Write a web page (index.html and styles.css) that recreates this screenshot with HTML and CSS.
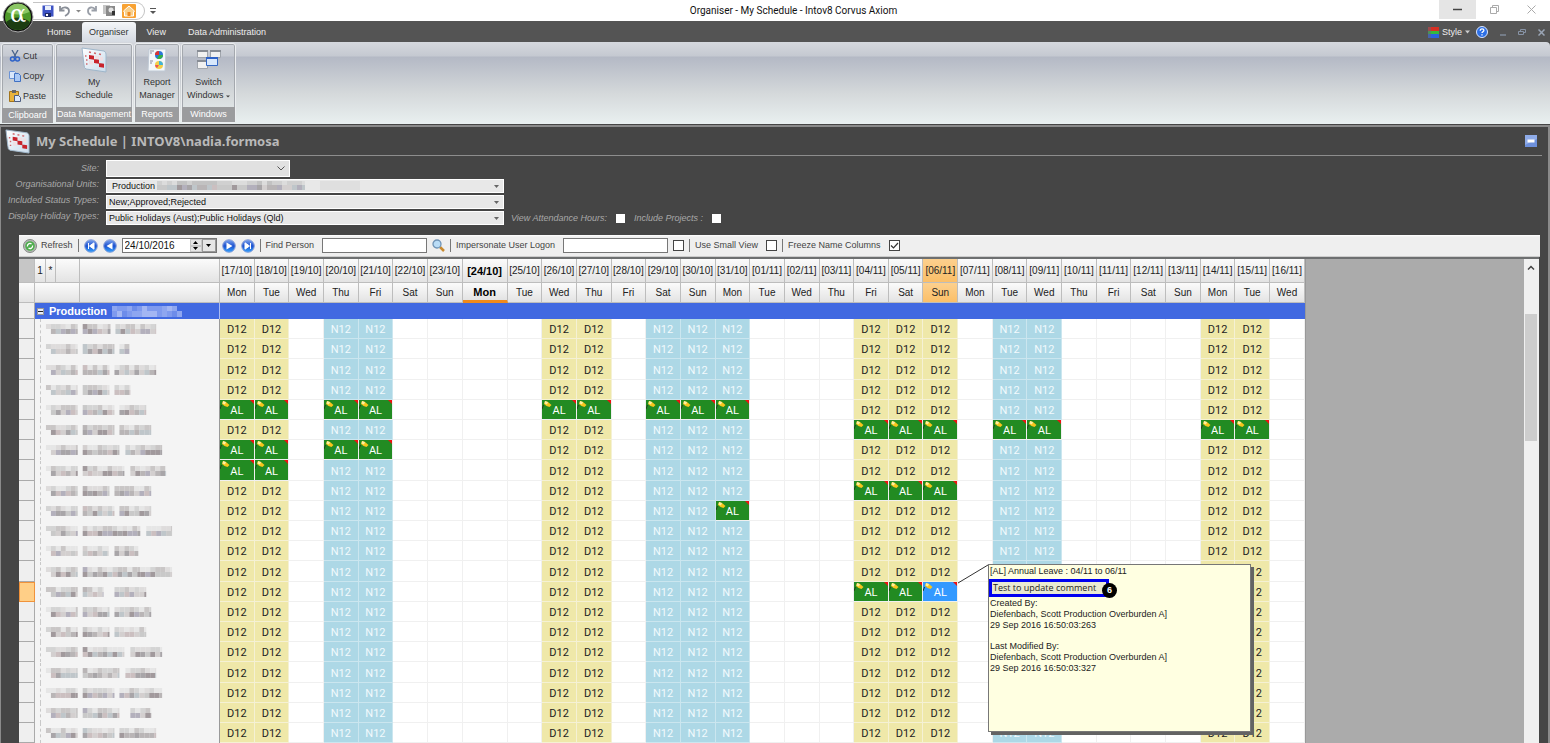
FILE: index.html
```html
<!DOCTYPE html>
<html lang="en">
<head>
<meta charset="utf-8">
<title>Organiser - My Schedule - Intov8 Corvus Axiom</title>
<link rel="stylesheet" href="styles.css">
</head>
<body>
<svg class="defs" width="0" height="0" aria-hidden="true">
  <defs>
    <linearGradient id="blueBall" x1="0" y1="0" x2="0" y2="1"><stop offset="0" stop-color="#7fa6ee"/><stop offset=".5" stop-color="#1b50cf"/><stop offset="1" stop-color="#35a5ff"/></linearGradient>
    <linearGradient id="sheet" x1="0" y1="0" x2="1" y2="1"><stop offset="0" stop-color="#ffffff"/><stop offset="1" stop-color="#c9dcec"/></linearGradient>
    <symbol id="calendar" viewBox="0 0 26 26">
      <path d="M1 1 L23 4 Q25 5 25 7 L25 25 L5 22 Q3 21 3 18 Z" fill="url(#sheet)" stroke="#9fb6ca"/>
      <path d="M8 5l2 .4M13 6l2 .4M18 7l2 .4M4 9h1.500M5 13h1.500M5 17h1.500" stroke="#d0686c" stroke-width="1.500"/>
      <path d="M8 8l5 .8v4l-5-.8zM13 12l5 .8v4l-5-.8zM18 16l5 .8v4l-5-.8z" fill="#c8232c"/>
      <path d="M8 13l4 .7v4l-4-.6zM14 8.500l4 .6v3l-4-.6zM19 9.500l3 .5v4l-3-.5z" fill="#f1dfe3"/>
    </symbol>
  </defs>
</svg>

<header class="titlebar">
  <button class="app-button" aria-label="Application menu">
    <svg width="32" height="32" viewBox="0 0 32 32"><circle cx="16" cy="16" r="15" fill="#111" stroke="#aaa"/><circle cx="16" cy="16" r="13" fill="#4f9a2a"/><path d="M4 21a13 13 0 0 0 24 0Q16 12 4 21z" fill="#1c3d12"/><path d="M4.500 11a12 12 0 0 1 23 0Q16 16 4.500 11z" fill="#8cc765"/></svg>
    <span class="alpha">α</span>
  </button>
  <div class="quick">
    <button aria-label="Save"><svg width="12" height="12" viewBox="0 0 12 12"><path d="M.5 .5h11v11h-10l-1-1z" fill="#3d52c4"/><path d="M3 1h6v4H3z" fill="#e9effb"/><path d="M3 8h6v4H3z" fill="#1e2a66"/><path d="M4 9h2v2H4z" fill="#fff"/></svg></button>
    <button aria-label="Undo"><svg width="12" height="12" viewBox="0 0 12 12"><path d="M1 1v4.500h4.500M1.500 5C4 1 10 2 10 6q0 3-4 5" fill="none" stroke="#8a8f98" stroke-width="1.800"/></svg></button>
    <button aria-label="Undo list"><svg width="5" height="4" viewBox="0 0 5 4"><path d="M0 1h5L2.500 3.500z" fill="#888"/></svg></button>
    <button aria-label="Redo"><svg width="12" height="12" viewBox="0 0 12 12"><path d="M10 1v4.500H5.500M9.500 5C7 1 2 2 2 6q0 3 3 4" fill="none" stroke="#9a9fa8" stroke-width="1.800"/></svg></button>
    <button aria-label="Copy view"><svg width="14" height="13" viewBox="0 0 14 13"><path d="M0 1h7v9H0z" fill="#c5c5c5"/><path d="M3 2h9v10H3z" fill="#8a8a8a"/><circle cx="8" cy="6" r="2.500" fill="#e4e4e4"/><path d="M9 7h3v4H9z" fill="#333"/></svg></button>
    <button aria-label="Home"><svg width="14" height="14" viewBox="0 0 14 14"><rect width="14" height="14" rx="1" fill="#f8a233"/><path d="M1.500 7L7 2l5.500 5-1 1v4h-9V8z" fill="#f9d08c" stroke="#fff" stroke-width="1"/><path d="M5.500 8h3v4h-3z" fill="#ef8c24"/></svg></button>
  </div>
  <button class="quick-more" aria-label="Customise toolbar"><svg width="6" height="6" viewBox="0 0 6 6"><path d="M0 .5h6" stroke="#555"/><path d="M0 3h6L3 6z" fill="#555"/></svg></button>
  <h1 class="window-title">Organiser - My Schedule - Intov8 Corvus Axiom</h1>
  <div class="window-buttons">
    <button class="minimise" aria-label="Minimise"><svg width="9" height="9" viewBox="0 0 9 9"><path d="M0 4.500h9" stroke="#444" stroke-width="1.500"/></svg></button>
    <button aria-label="Restore"><svg width="9" height="9" viewBox="0 0 9 9"><path d="M.5 2.500h6v6h-6zM2.500 2V.5h6v6H7" fill="none" stroke="#aaa"/></svg></button>
    <button aria-label="Close"><svg width="9" height="9" viewBox="0 0 9 9"><path d="M.5 .5l8 8M8.500 .5l-8 8" stroke="#aaa"/></svg></button>
  </div>
</header>

<nav class="tabs">
  <a href="#home">Home</a>
  <a href="#organiser" class="active">Organiser</a>
  <a href="#view">View</a>
  <a href="#admin">Data Administration</a>
  <div class="tab-tools">
    <button><svg width="11" height="11" viewBox="0 0 11 11"><path d="M0 0h11v4H0z" fill="#d62f23"/><path d="M0 4h11v3H0z" fill="#35b83c"/><path d="M0 7h11v4H0z" fill="#2b62de"/><path d="M0 0h3v11H0z" fill="#667" opacity=".5"/></svg>Style<svg width="5" height="4" viewBox="0 0 5 4"><path d="M0 .5h5L2.500 3.500z" fill="#ccc"/></svg></button>
    <button aria-label="Help"><svg width="12" height="12" viewBox="0 0 12 12"><circle cx="6" cy="6" r="5.500" fill="#2c6fe6" stroke="#dbe6ff"/><path d="M4.200 4.800q0-2 1.900-2 1.800 0 1.800 1.500 0 1-1.100 1.500-.8.400-.8 1.300M6 8.200v1.400" fill="none" stroke="#fff" stroke-width="1.300"/></svg></button>
    <button aria-label="Minimise view"><svg width="6" height="8" viewBox="0 0 6 8"><path d="M0 7h6" stroke="#8793a5" stroke-width="1.300"/></svg></button>
    <button aria-label="Restore view"><svg width="8" height="6" viewBox="0 0 8 6"><path d="M.5 2.500h5v3h-5zM2.500 2V.5h5v3H6" fill="none" stroke="#8793a5"/></svg></button>
    <button aria-label="Close view"><svg width="7" height="7" viewBox="0 0 7 7"><path d="M.5 .5l6 6M6.500 .5l-6 6" stroke="#9aa5b5" stroke-width="1.500"/></svg></button>
  </div>
</nav>

<section class="ribbon">
  <div class="group">
    <div class="small-tools">
      <button><svg width="12" height="12" viewBox="0 0 12 12"><path d="M3 0l4 7M9 0L5 7" stroke="#49648c" stroke-width="1.300"/><circle cx="3.500" cy="9" r="2" fill="none" stroke="#2d62c8" stroke-width="1.500"/><circle cx="8.500" cy="9" r="2" fill="none" stroke="#2d62c8" stroke-width="1.500"/></svg>Cut</button>
      <button><svg width="12" height="12" viewBox="0 0 12 12"><path d="M.5 1.500h5l1 1v6h-6z" fill="#d9e7fb" stroke="#6b93d6"/><path d="M5.500 3.500h4l2 2v6h-6z" fill="#a9c8f5" stroke="#3f70c2"/></svg>Copy</button>
      <button><svg width="12" height="12" viewBox="0 0 12 12"><path d="M.5 1.500h9v10h-9z" fill="#e9b33c" stroke="#a2741c"/><path d="M3 0h4v3H3z" fill="#666"/><path d="M5.500 5.500h4l2 2v4h-6z" fill="#dce8fa" stroke="#4b5c80"/></svg>Paste</button>
    </div>
    <div class="caption">Clipboard</div>
  </div>
  <div class="group wide">
    <button class="big"><svg width="26" height="26"><use href="#calendar"/></svg><span>My<br>Schedule</span></button>
    <div class="caption">Data Management</div>
  </div>
  <div class="group">
    <button class="big"><svg width="24" height="26" viewBox="0 0 24 26"><path d="M4 2h17l-1 22H3z" fill="#f4f7fa" stroke="#bfc9d5"/><circle cx="14" cy="8" r="4" fill="#2b77d8"/><path d="M14 8V4a4 4 0 0 0-4 4z" fill="#d33"/><path d="M14 8h4a4 4 0 0 1-6 3.500z" fill="#35b044"/><circle cx="14" cy="18" r="4" fill="#f2cf4a"/><path d="M14 18v-4a4 4 0 0 1 4 4z" fill="#41b4d8"/><path d="M14 18h-4a4 4 0 0 0 2 3z" fill="#e55"/><path d="M5 4h4M5 6h2M5 14h3M5 16h2" stroke="#889"/></svg><span>Report<br>Manager</span></button>
    <div class="caption">Reports</div>
  </div>
  <div class="group">
    <button class="big"><svg width="26" height="26" viewBox="0 0 26 26"><g fill="#f1f1f1" stroke="#a0a5ac"><path d="M1.500 3.500h10v7h-10zM14.500 3.500h10v7h-10zM1.500 13.500h10v8h-10z"/></g><path d="M1 4h11M14 4h11M1 14h11" stroke="#878c94" stroke-width="2"/><path d="M10.500 10.500h11v8h-11z" fill="#d8e8fc" stroke="#3468c4"/><path d="M10 11h12" stroke="#2f63c7" stroke-width="2"/></svg><span>Switch<br>Windows <svg width="4" height="3" viewBox="0 0 4 3"><path d="M0 .5h4L2 2.500z" fill="#444"/></svg></span></button>
    <div class="caption">Windows</div>
  </div>
</section>

<main class="panel">
  <div class="panel-head">
    <svg width="25" height="25"><use href="#calendar"/></svg>
    <h2>My Schedule | INTOV8\nadia.formosa</h2>
    <button aria-label="Collapse"><svg width="12" height="12" viewBox="0 0 12 12"><rect width="12" height="12" fill="#6d90dc"/><path d="M0 0h12v4L0 10z" fill="#8eabe8"/><path d="M2.500 4.500h7v3h-7z" fill="#fff"/></svg></button>
  </div>

  <form class="filters">
    <label for="site">Site:</label>
    <div class="combo site"><select id="site"><option></option></select><svg width="8" height="5" viewBox="0 0 8 5"><path d="M.5 .5L4 4 7.500 .5" fill="none" stroke="#555"/></svg></div>
    <label for="units">Organisational Units:</label>
    <div class="combo first"><select id="units"><option>Production</option></select><span class="redacted" id="unit-mask"></span><svg width="5" height="3" viewBox="0 0 5 3"><path d="M0 0h5L2.500 3z" fill="#666"/></svg></div>
    <label for="status">Included Status Types:</label>
    <div class="combo"><select id="status"><option>New;Approved;Rejected</option></select><svg width="5" height="3" viewBox="0 0 5 3"><path d="M0 0h5L2.500 3z" fill="#666"/></svg></div>
    <label for="holiday">Display Holiday Types:</label>
    <div class="combo"><select id="holiday"><option>Public Holidays (Aust);Public Holidays (Qld)</option></select><svg width="5" height="3" viewBox="0 0 5 3"><path d="M0 0h5L2.500 3z" fill="#666"/></svg></div>
    <div class="checks">
      <label for="attendance">View Attendance Hours:</label><input type="checkbox" id="attendance">
      <label for="projects">Include Projects :</label><input type="checkbox" id="projects">
    </div>
  </form>

  <div class="toolbar">
    <button><svg width="14" height="14" viewBox="0 0 14 14"><circle cx="7" cy="7" r="6.500" fill="#b5b9b5" stroke="#858985"/><circle cx="7" cy="7" r="4.800" fill="#4fae4e"/><path d="M4.500 7.500a2.500 2.500 0 0 1 4-2.500M9.500 6.500a2.500 2.500 0 0 1-4 2.500" fill="none" stroke="#fff" stroke-width="1.300"/></svg><span class="refresh">Refresh</span></button>
    <i class="bar"></i>
    <button aria-label="First"><svg width="14" height="14" viewBox="0 0 14 14"><circle cx="7" cy="7" r="6.300" fill="url(#blueBall)" stroke="#8aa0d8"/><path d="M4.500 4v6M10 3.800v6.400L5.500 7z" stroke="#fff" fill="#fff"/></svg></button>
    <button aria-label="Previous"><svg width="14" height="14" viewBox="0 0 14 14"><circle cx="7" cy="7" r="6.300" fill="url(#blueBall)" stroke="#8aa0d8"/><path d="M9.500 3.500v7L3.500 7z" fill="#fff"/></svg></button>
    <div class="date">
      <input type="text" value="24/10/2016" aria-label="Date">
      <span class="spin"><button type="button" aria-label="Later"><svg width="5" height="3" viewBox="0 0 5 3"><path d="M0 3h5L2.500 0z"/></svg></button><button type="button" aria-label="Earlier"><svg width="5" height="3" viewBox="0 0 5 3"><path d="M0 0h5L2.500 3z"/></svg></button></span>
      <button type="button" class="drop" aria-label="Open calendar"><svg width="5" height="3" viewBox="0 0 5 3"><path d="M0 0h5L2.500 3z"/></svg></button>
    </div>
    <button aria-label="Next"><svg width="14" height="14" viewBox="0 0 14 14"><circle cx="7" cy="7" r="6.300" fill="url(#blueBall)" stroke="#8aa0d8"/><path d="M4.500 3.500v7l6-3.500z" fill="#fff"/></svg></button>
    <button aria-label="Last"><svg width="14" height="14" viewBox="0 0 14 14"><circle cx="7" cy="7" r="6.300" fill="url(#blueBall)" stroke="#8aa0d8"/><path d="M9.500 4v6M4 3.800v6.400L8.500 7z" stroke="#fff" fill="#fff"/></svg></button>
    <i class="bar"></i>
    <label for="find">Find Person</label><input type="text" id="find">
    <button aria-label="Search"><svg width="13" height="13" viewBox="0 0 13 13"><path d="M8 8l4 4" stroke="#c98a2e" stroke-width="2.500"/><circle cx="5" cy="5" r="4" fill="#b9dcf6" stroke="#6f93b5" stroke-width="1.300"/></svg></button>
    <i class="bar"></i>
    <label for="logon">Impersonate User Logon</label><input type="text" id="logon"><input type="checkbox" id="logon-on" aria-label="Impersonate">
    <i class="bar"></i>
    <label for="small">Use Small View</label><input type="checkbox" id="small">
    <i class="bar"></i>
    <label for="freeze">Freeze Name Columns</label><input type="checkbox" id="freeze" checked>
  </div>

  <div class="grid-area">
    <div class="sheet">
      <table id="schedule"></table>
      <svg class="pointer" width="32" height="20" viewBox="0 0 32 20"><path d="M1 19L31 1" stroke="#333" fill="none"/></svg>
      <aside class="note">
        <p>[AL] Annual Leave : 04/11 to 06/11</p>
        <p class="marked">Test to update comment<b>6</b></p>
        <p>Created By:</p>
        <p>Diefenbach, Scott <span>Production Overburden A]</span></p>
        <p>29 Sep 2016 16:50:03:263</p>
        <p class="later">Last Modified By:</p>
        <p>Diefenbach, Scott <span>Production Overburden A]</span></p>
        <p>29 Sep 2016 16:50:03:327</p>
      </aside>
    </div>
    <div class="scrollbar"><button aria-label="Scroll up"><svg width="8" height="5" viewBox="0 0 8 5"><path d="M1 4.500L4 1.500 7 4.500" fill="none" stroke="#444" stroke-width="1.500"/></svg></button><div class="thumb"></div></div>
  </div>
</main>
<script src="schedule.js"></script>
</body>
</html>
```
FILE: styles.css
```css
* { box-sizing: border-box; }
body {
  margin: 0; height: 100vh; overflow: hidden; display: flex; flex-direction: column;
  background: #454545; color: #333;
  font: 9px/13px "Liberation Sans", sans-serif;
}
button { border: 0; padding: 0; margin: 0; background: none; color: inherit; font: inherit; display: inline-flex; align-items: center; justify-content: center; }
input, select { font: inherit; margin: 0; color: #111; }
h1, h2, p { margin: 0; }
svg { display: block; flex: none; }
.defs { position: absolute; }

.titlebar { position: relative; height: 21px; flex: none; background: #fff; display: flex; align-items: center; padding-left: 33px; }
.app-button { position: absolute; left: 2px; top: 1px; width: 32px; height: 32px; z-index: 3; }
.alpha { position: absolute; inset: 0; color: #fff; font: 24px/27px "DejaVu Serif", serif; text-align: center; }
.quick { height: 18px; width: 112px; display: flex; align-items: center; gap: 5px; padding-left: 9px; border: 1px solid #c4c4c4; border-left: 0; border-radius: 0 9px 9px 0; }
.quick-more { margin-left: 5px; }
.window-title { position: absolute; left: 38%; right: 36%; padding-left: 6px; text-align: center; font: 10px/20px Roboto, sans-serif; color: #111; white-space: nowrap; }
.window-buttons { margin-left: auto; display: flex; align-self: stretch; }
.window-buttons button { width: 37px; height: 19px; }
.window-buttons .minimise { background: #e5e5e5; }

.tabs { flex: none; height: 21px; padding: 1px 5px 0 36px; display: flex; align-items: stretch; background: #545454; color: #eee; }
.tabs a { color: inherit; text-decoration: none; line-height: 20px; padding: 0 11px; }
.tabs a.active { background: linear-gradient(#f4f6f8, #d5dae2); color: #333; padding: 0 7px; border-radius: 3px 3px 0 0; }
.tab-tools { margin-left: auto; display: flex; align-items: center; gap: 12px; }
.tab-tools button { gap: 3px; }
.tab-tools button:nth-child(2) { margin-left: -6px; }

.ribbon { flex: none; height: 82px; padding: 1px; display: flex; gap: 1px; background: linear-gradient(#d5d8de 0, #c5c9d1 14px, #b4b9c5 15px, #d5d9db 52px, #e9f0f0 82px); border-radius: 0 4px 0 0; }
.group { display: flex; flex-direction: column; justify-content: space-between; border: 1px solid #eceef0; border-radius: 3px; box-shadow: 0 0 0 1px #a4a8ae inset; min-width: 51px; }
.group.wide { min-width: 78px; }
.group:nth-child(3) { min-width: 46px; }
.group:nth-child(4) { min-width: 55px; }
.caption { height: 15px; line-height: 15px; text-align: center; background: #9b9c9e; color: #fff; white-space: nowrap; }
.small-tools { display: flex; flex-direction: column; align-items: flex-start; padding: 2px 7px; }
.small-tools button { height: 20px; gap: 2px; }
.big { flex-direction: column; gap: 3px; padding-top: 3px; }
.big span svg { display: inline-block; }

.panel { flex: 1; min-height: 0; display: flex; flex-direction: column; margin-top: 1px; padding: 0 9px 0 18px; border: solid #8a8a8a; border-width: 2px 2px 0 1px; background: #454545; }
.panel-head { height: 29px; flex: none; display: flex; align-items: center; gap: 6px; margin: 0 -3px 0 -5px; border-bottom: 1px solid #8d8d8d; }
.panel-head svg { margin-left: -9px; }
.panel-head button svg { margin: 0 5px 0 0; }
.panel-head h2 { flex: 1; color: #b9b9b9; font: bold 13px/20px "Noto Sans", sans-serif; }

.filters { flex: none; display: grid; grid-template-columns: 80px 398px 1fr; grid-template-rows: 17px 14px 14px 14px; gap: 2px 7px; padding: 4px 0 10px; align-items: center; }
.filters label { color: #a8a8a8; font-style: italic; white-space: nowrap; justify-self: end; }
.filters > label { grid-column: 1; line-height: 11px; align-self: start; }
.filters > label:first-child { align-self: center; }
.combo { grid-column: 2; position: relative; height: 14px; }
.combo select { appearance: none; display: block; width: 100%; height: 100%; border: 1px solid #fff; border-radius: 0; background: #e8e8e8; padding: 0 2px; line-height: 12px; }
.combo.first select { padding-left: 5px; }
.combo > svg { position: absolute; right: 5px; top: 6px; }
.combo.site { width: 184px; height: 17px; }
.combo.site select { background: #e1e1e1; }
.redacted { position: absolute; left: 51px; top: 2px; }
.checks { grid-column: 3; grid-row: 4; display: flex; align-items: center; gap: 8px; }

input[type=checkbox] { appearance: none; width: 11px; height: 11px; border: 1px solid #444; background: #fff; flex: none; }
input[type=checkbox]:checked { background: #fff url("data:image/svg+xml,%3Csvg xmlns='http://www.w3.org/2000/svg' viewBox='0 0 9 9'%3E%3Cpath d='M1 4.500l2.500 2.500L8 2' fill='none' stroke='%23333' stroke-width='1.200'/%3E%3C/svg%3E"); }

.toolbar { flex: none; height: 22px; margin-right: -1px; display: flex; align-items: center; gap: 5px; padding-left: 4px; background: linear-gradient(#fff 0, #efefef 2px); border-bottom: 1px solid #ccc; color: #444; white-space: nowrap; }
.toolbar .refresh { margin-left: 4px; }
.toolbar input[type=text] { height: 15px; width: 105px; border: 1px solid #777; background: #fff; padding: 0 2px; }
.toolbar label { margin-right: 3px; }
.bar { width: 1px; height: 13px; background: #777; }
.date { display: flex; width: 95px; height: 15px; border: 1px solid #777; background: #fff; }
.toolbar .date input { flex: 1; min-width: 0; border: 0; height: 13px; font-size: 10px; }
.spin { display: flex; flex-direction: column; width: 12px; }
.spin button { flex: 1; background: #e6e6e6; border: 1px solid #c8c8c8; }
.drop { width: 14px; background: #e6e6e6; border: 1px solid #999; }

.grid-area { flex: 1; min-height: 0; display: flex; border-top: 2px solid #6d6f70; background: #ababab; }
.sheet { position: relative; flex: 1; min-width: 0; overflow: hidden; }
table { table-layout: fixed; border-collapse: separate; border-spacing: 0; width: 1287px; border-right: 1px solid #999; background: #fff; }
.c-head { width: 16px; } .c-one { width: 11px; } .c-star { width: 10px; } .c-id { width: 24px; } .c-name { width: 140px; } .c-today { width: 45px; }
th, td { padding: 0; text-align: center; font-weight: normal; white-space: nowrap; overflow: hidden; }
thead th { height: 24px; padding-top: 1px; background: linear-gradient(#fbfbfb, #e3e3e3); border: solid #bdbdbd; border-width: 0 1px 1px 0; font: 10px/12px "Liberation Sans", sans-serif; color: #222; }
thead tr + tr th { height: 20px; }
thead th.corner { background: #c6c6c6; }
thead th.today { font-weight: bold; font-size: 11px; color: #000; }
thead tr + tr th.today { border-bottom: 3px solid #f08a1c; }
thead th.picked { background: linear-gradient(#fcd08e, #fbbf68); }
.row-head { background: #efefef; border: solid #aaa; border-width: 0 1px 1px 0; }
.row-head.picked { background: #ffcf87; border: 1px solid #f0923a; }
.unit { height: 16px; background: #4169e1; color: #fff; }
.unit.title { text-align: left; border-right: 1px solid #a9bbf2; }
.unit-in { display: flex; align-items: center; gap: 5px; height: 12px; padding-left: 2px; font: bold 11px/12px "Liberation Sans", sans-serif; }
.unit-in button { width: 7px; height: 7px; background: #e8ecf8; border: 1px solid #999; }
tbody tr { height: 20px; }
tbody tr.tall { height: 21px; }
tbody tr.unit-row { height: 16px; }
.person { background: #f4f4f4; border: solid #999; border-width: 0 1px 0 0; text-align: left; }
.person svg { border-left: 1px dashed #c8c8c8; margin-left: 5px; }
.day { padding-top: 2px; border: solid #f0f0f0; border-width: 0 1px 1px 0; font: 11px/13px Roboto, sans-serif; color: #222; }
.d12 { background: #efe8a9; border-color: #f5f1d4; }
.n12 { background: #add8e6; border-color: #cbe6ef; color: #f2fafd; }
.al { position: relative; background: #228b22; color: #fff; }
.al.picked { background: #3399ff; }
.al svg { position: absolute; left: 0; top: 0; }
.al::after { content: ""; position: absolute; right: 0; top: 0; border: 2px solid #e11; border-left-color: transparent; border-bottom-color: transparent; }

.pointer { position: absolute; left: 938px; top: 305px; }
.note { position: absolute; left: 969px; top: 305px; width: 263px; height: 168px; background: #ffffe1; border: 1px solid #777; box-shadow: 3px 3px 0 #636363; color: #222; line-height: 11px; padding: 1px; white-space: nowrap; }
.note .marked { position: relative; width: 120px; height: 18px; margin: 2px 0 1px -1px; padding-left: 1px; border: 3px solid #0000f0; background: #e9e9d2; font: 9px/12px "Open Sans", sans-serif; }
.note b { position: absolute; right: -11px; top: 1px; width: 15px; height: 15px; border-radius: 50%; background: #000; color: #fff; font: bold 9px/15px "Liberation Sans", sans-serif; text-align: center; }
.note .later { margin-top: 10px; }

.scrollbar { width: 15px; flex: none; background: #f0f0f0; display: flex; flex-direction: column; padding: 0 2px 0 1px; }
.scrollbar button { height: 16px; margin-bottom: 39px; }
.thumb { height: 127px; background: #cdcdcd; }
```
FILE: schedule.js
```js
const day = 86400000, start = Date.UTC(2016, 9, 17);
const names = ["Sun", "Mon", "Tue", "Wed", "Thu", "Fri", "Sat"];
const two = n => String(n).padStart(2, "0");
const TODAY = 7, PICKED = 20, PICKED_ROW = 13;
const dayShift = new Set([0, 1, 9, 10, 18, 19, 20, 28, 29]);
const nightShift = new Set([3, 4, 12, 13, 14, 22, 23]);
const leave = {
  4: [0, 1, 3, 4, 9, 10, 12, 13, 14], 5: [18, 19, 20, 22, 23, 28, 29],
  6: [0, 1, 3, 4], 7: [0, 1], 8: [18, 19, 20], 9: [14], 13: [18, 19, 20]
};
/* Masked name extents per person: first word end, second word start and end. */
const people = [[28,33,74],[32,37,47],[27,32,74],[27,32,48],[32,37,64],[32,37,69],[37,43,80],[42,48,84],[27,32,69],[32,37,69],[58,64,90],[26,32,56],[58,58,90],[21,32,64],[27,32,69],[27,32,64],[42,48,80],[37,43,74],[32,37,80],[37,48,69],[32,37,74]];

let seed = 11;
const rnd = () => (seed = (seed * 16807) % 2147483647) / 2147483647;
const greys = ["#b9b5b6", "#c9c9c9", "#a8a5a8", "#d3cfcf", "#bfc6ca", "#a1999c", "#cbbfc0", "#b3b0bc"];
const blues = ["#8ea6f0", "#7f9aee", "#a3b6f3", "#6d8cea"];
function blocks(from, to, y, h, colors) {
  let s = "";
  for (let x = from; x < to; x += 5) {
    const w = Math.min(5, to - x);
    s += `<rect x="${x}" y="${y}" width="${w}" height="${h}" fill="${colors[Math.floor(rnd() * colors.length)]}"/>`;
  }
  return s;
}
function mask(p) {
  const top = ["#dedcdc", "#e6e6e6", "#d4d4d4", "#c9c6c6"];
  return `<svg width="140" height="20" viewBox="0 0 140 20">` +
    blocks(5, 37, 5, 5, top) + blocks(10, 37, 10, 5, greys) +
    blocks(42, 47, 5, 5, greys) + blocks(47, 42 + p[0], 5, 5, top) + blocks(42, 42 + p[0], 10, 5, greys) +
    blocks(42 + p[1], 42 + p[2], 5, 5, top) + blocks(42 + p[1], 42 + p[2], 10, 5, greys) + `</svg>`;
}
const flag = `<svg width="10" height="10" viewBox="0 0 10 10"><path d="M1.500 5L0 9" stroke="#20401a"/><path d="M3 1l3 1 3.500 3-2 2-3-1L2 4z" fill="#f8c51c"/><path d="M3 1l3 1-1 2.500-2.500-1z" fill="#fff0a0"/></svg>`;
const mark = i => i === TODAY ? "today" : i === PICKED ? "picked" : "";
let dates = "", days = "";
for (let i = 0; i < 31; i++) {
  const d = new Date(start + i * day);
  dates += `<th class="${mark(i)}">[${two(d.getUTCDate())}/${two(d.getUTCMonth() + 1)}]</th>`;
  days += `<th class="${mark(i)}">${names[d.getUTCDay()]}</th>`;
}
let cols = `<col class="c-head"><col class="c-one"><col class="c-star"><col class="c-id"><col class="c-name">`;
for (let i = 0; i < 31; i++) cols += i === TODAY ? `<col class="c-today">` : `<col>`;
let body = `<tr class="unit-row"><td class="row-head"></td><td class="unit title" colspan="4"><div class="unit-in"><button aria-label="Collapse group"><svg width="5" height="5" viewBox="0 0 5 5"><path d="M0 2.500h5" stroke="#222"/></svg></button>Production<svg width="70" height="11" viewBox="0 0 70 11">${blocks(0, 65, 0, 6, blues)}${blocks(0, 70, 5, 6, blues)}</svg></div></td><td class="unit" colspan="31"></td></tr>`;
people.forEach((p, r) => {
  body += `<tr class="${r % 5 === 2 ? "tall" : ""}"><td class="row-head ${r === PICKED_ROW ? "picked" : ""}"></td><td class="person" colspan="4">${mask(p)}</td>`;
  for (let i = 0; i < 31; i++) {
    if (leave[r] && leave[r].includes(i)) body += `<td class="day al ${r === PICKED_ROW && i === PICKED ? "picked" : ""}">${flag}AL</td>`;
    else if (dayShift.has(i)) body += `<td class="day d12">D12</td>`;
    else if (nightShift.has(i)) body += `<td class="day n12">N12</td>`;
    else body += `<td class="day"></td>`;
  }
  body += `</tr>`;
});
document.getElementById("schedule").innerHTML =
  `<colgroup>${cols}</colgroup><thead><tr><th class="corner"></th><th>1</th><th>*</th><th></th><th></th>${dates}</tr>` +
  `<tr><th></th><th colspan="3"></th><th></th>${days}</tr></thead><tbody>${body}</tbody>`;
document.getElementById("unit-mask").innerHTML =
  `<svg width="205" height="9" viewBox="0 0 205 9">${blocks(0, 148, 0, 4, ["#d0d0d0", "#c2c2c2", "#dcdcdc"])}${blocks(0, 148, 4, 5, greys)}${blocks(163, 203, 0, 9, ["#dfdfdf"])}</svg>`;
```
